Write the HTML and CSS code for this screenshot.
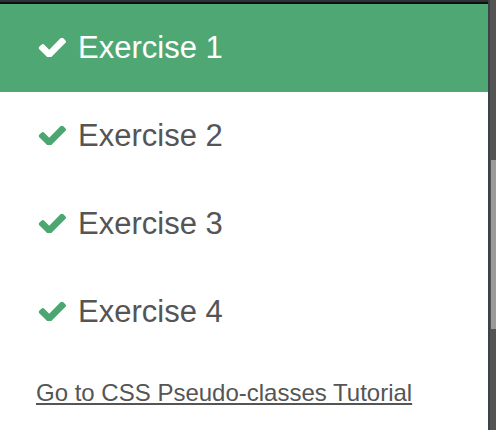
FILE: index.html
```html
<!DOCTYPE html>
<html>
<head>
<meta charset="utf-8">
<link rel="stylesheet" href="styles.css">
</head>
<body>
<div class="frame">
  <div class="page">
    <div class="topbar"></div>
    <ul class="list">
      <li class="item active">
        <svg class="check" viewBox="77 370 1594 1056" width="28" height="19"><path d="M1671 566q0 40-28 68l-724 724-136 136q-28 28-68 28t-68-28l-136-136-362-362q-28-28-28-68t28-68l136-136q28-28 68-28t68 28l294 295 656-657q28-28 68-28t68 28l136 136q28 28 28 68z"/></svg>
        <span>Exercise 1</span>
      </li>
      <li class="item">
        <svg class="check" viewBox="77 370 1594 1056" width="28" height="19"><path d="M1671 566q0 40-28 68l-724 724-136 136q-28 28-68 28t-68-28l-136-136-362-362q-28-28-28-68t28-68l136-136q28-28 68-28t68 28l294 295 656-657q28-28 68-28t68 28l136 136q28 28 28 68z"/></svg>
        <span>Exercise 2</span>
      </li>
      <li class="item">
        <svg class="check" viewBox="77 370 1594 1056" width="28" height="19"><path d="M1671 566q0 40-28 68l-724 724-136 136q-28 28-68 28t-68-28l-136-136-362-362q-28-28-28-68t28-68l136-136q28-28 68-28t68 28l294 295 656-657q28-28 68-28t68 28l136 136q28 28 28 68z"/></svg>
        <span>Exercise 3</span>
      </li>
      <li class="item">
        <svg class="check" viewBox="77 370 1594 1056" width="28" height="19"><path d="M1671 566q0 40-28 68l-724 724-136 136q-28 28-68 28t-68-28l-136-136-362-362q-28-28-28-68t28-68l136-136q28-28 68-28t68 28l294 295 656-657q28-28 68-28t68 28l136 136q28 28 28 68z"/></svg>
        <span>Exercise 4</span>
      </li>
    </ul>
    <p class="more"><a href="#">Go to CSS Pseudo-classes Tutorial</a></p>
  </div>
  <div class="scrollbar"><div class="thumb"></div></div>
</div>
</body>
</html>
```
FILE: styles.css
```css
html, body {
  margin: 0;
  padding: 0;
  background: #fff;
}
body {
  font-family: "Liberation Sans", Arial, sans-serif;
  color: #555;
  overflow: hidden;
}
.frame {
  display: flex;
  width: 496px;
  height: 430px;
}
.page {
  width: 488px;
  flex: none;
}
.topbar {
  height: 2px;
  background: #2e3237;
  border-bottom: 2px solid #0e0f10;
}
.list {
  list-style: none;
  margin: 0;
  padding: 0;
}
.item {
  display: flex;
  align-items: center;
  height: 88px;
  padding-left: 38px;
  font-size: 31px;
  color: #555;
}
.item .check {
  fill: #4aa770;
  margin-right: 12px;
  margin-top: -2px;
  flex: none;
}
.item.active {
  background: #4fa874;
  color: #fff;
}
.item.active .check {
  fill: #fff;
}
.more {
  margin: 0;
  padding: 23px 0 0 36px;
  font-size: 24px;
  line-height: 28px;
}
.more a {
  color: #555;
  text-decoration: underline;
}
.scrollbar {
  flex: none;
  width: 6px;
  border-left: 2px solid #3b4248;
  background: #545454;
  display: flex;
  flex-direction: column;
}
.thumb {
  margin-top: 160px;
  height: 169px;
  margin-left: 1px;
  background: #9a9a9a;
}
```
